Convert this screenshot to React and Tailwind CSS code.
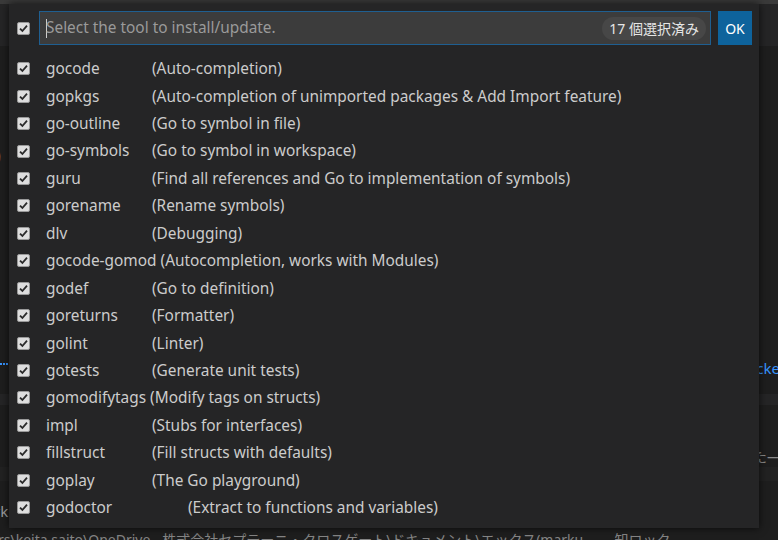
import React from 'react';

const tools = [
  { name: 'gocode', desc: '(Auto-completion)' },
  { name: 'gopkgs', desc: '(Auto-completion of unimported packages & Add Import feature)' },
  { name: 'go-outline', desc: '(Go to symbol in file)' },
  { name: 'go-symbols', desc: '(Go to symbol in workspace)' },
  { name: 'guru', desc: '(Find all references and Go to implementation of symbols)' },
  { name: 'gorename', desc: '(Rename symbols)' },
  { name: 'dlv', desc: '(Debugging)' },
  { name: 'gocode-gomod', desc: '(Autocompletion, works with Modules)', tight: true },
  { name: 'godef', desc: '(Go to definition)' },
  { name: 'goreturns', desc: '(Formatter)' },
  { name: 'golint', desc: '(Linter)' },
  { name: 'gotests', desc: '(Generate unit tests)' },
  { name: 'gomodifytags', desc: '(Modify tags on structs)', tight: true },
  { name: 'impl', desc: '(Stubs for interfaces)' },
  { name: 'fillstruct', desc: '(Fill structs with defaults)' },
  { name: 'goplay', desc: '(The Go playground)' },
  { name: 'godoctor', desc: '(Extract to functions and variables)', far: true },
];

function Check() {
  return (
    <span className="w-[13px] h-[13px] shrink-0 rounded-[2px] border border-[#9a9a9a] bg-[#dedede] flex items-center justify-center">
      <svg width="9" height="9" viewBox="0 0 9 9">
        <path d="M1 4.6 L3.4 7 L8 1.6" fill="none" stroke="#2a2a2a" strokeWidth="1.8" />
      </svg>
    </span>
  );
}

function Row({ tool }) {
  return (
    <div className="h-[27.45px] flex items-center pl-[8px]">
      <Check />
      <div className="ml-[16px] flex items-center whitespace-pre text-[15.4px] text-[#cccccc]">
        <span className={tool.tight ? '' : 'w-[106px]'}>{tool.tight ? tool.name + ' ' : tool.name}</span>
        <span className={tool.far ? 'ml-[36px]' : ''}>{tool.desc}</span>
      </div>
    </div>
  );
}

export default function App() {
  return (
    <div
      className="relative w-[778px] h-[540px] overflow-hidden bg-[#1e1e1e]"
      style={{ fontFamily: '"Noto Sans", "Noto Sans CJK JP", sans-serif' }}
    >
      {/* editor behind the picker */}
      <div className="h-[4px] bg-[#3a3a3a]" />
      <div className="h-[42px] bg-[#252526]" />
      <div className="h-[82px]" />
      <div className="h-[50px] text-[40px] leading-[50px] text-[#bdbdbd] -ml-[22px]">o</div>
      <div className="h-[184px]" />
      <div className="h-[4px] flex items-center justify-between">
        <div className="w-[8px] border-t-2 border-dotted border-[#3794ff]" />
        <div className="text-[15px] text-[#3794ff] leading-[4px] -mr-[2px] pt-[8px]">cke</div>
      </div>
      <div className="h-[28px]" />
      <div className="h-[11px] bg-[#252526]" />
      <div className="h-[40px]" />
      <div className="h-[22px] flex justify-end items-center text-[15px] text-[#8a8a8a]">
        <span className="-mr-[4px]">た—</span>
      </div>
      <div className="h-[14px] bg-[#222222]" />
      <div className="h-[22px]" />
      <div className="h-[16px] flex items-center text-[15px] text-[#9d9d9d] -ml-[6px]">rk</div>
      <div className="h-[21px] flex items-end whitespace-nowrap text-[14px] text-[#858585] -ml-[2px]">
        <span className="leading-[14px] translate-y-[7px]">rs\keita.saito\OneDrive - 株式会社セプテーニ・クロスゲート\ドキュメント\エックス(marku...</span>
        <span className="ml-[20px] leading-[14px] translate-y-[7px]">知ロック</span>
      </div>

      {/* quick pick */}
      <div className="absolute left-[9px] top-[4px] w-[750px] h-[524px] bg-[#252526] shadow-[0_0_8px_rgba(0,0,0,0.7)]">
        <div className="flex items-center h-[34px] mt-[7px] pl-[8px] pr-[7px]">
          <Check />
          <div className="ml-[9px] flex-1 h-[34px] bg-[#3c3c3c] border border-[#1f5f91] flex items-center pl-[6px] pr-[4px]">
            <span className="w-[1px] h-[19px] bg-[#cccccc]" />
            <span className="text-[15.4px] text-[#9a9a9a] -ml-[1px]">Select the tool to install/update.</span>
            <span className="ml-auto h-[23px] px-[7px] rounded-full bg-[#474747] text-[#e6e6e6] text-[14px] flex items-center">
              17 個選択済み
            </span>
          </div>
          <button className="ml-[7px] w-[34px] h-[34px] bg-[#0e639c] text-white text-[14px] flex items-center justify-center">
            OK
          </button>
        </div>
        <div className="mt-[10px]">
          {tools.map((t) => (
            <Row key={t.name} tool={t} />
          ))}
        </div>
      </div>
    </div>
  );
}
